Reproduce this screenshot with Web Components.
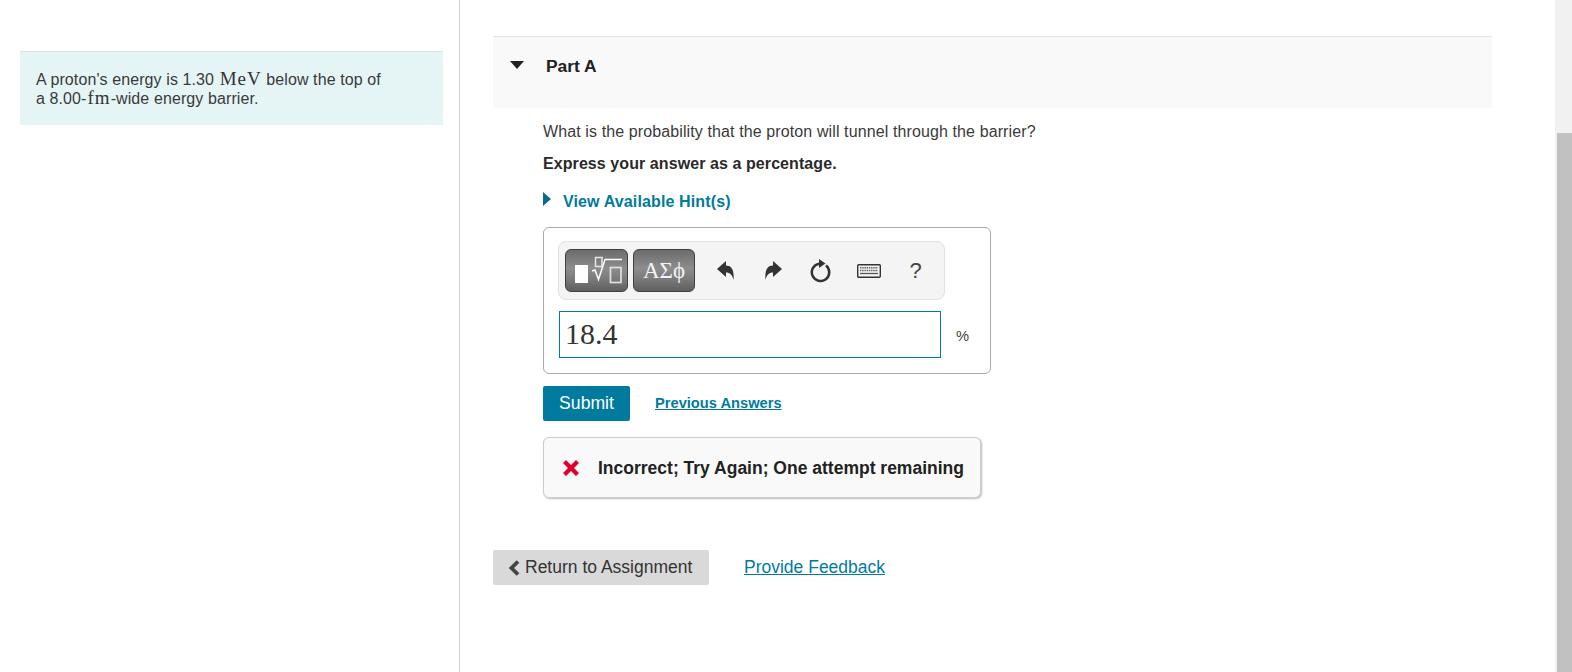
<!DOCTYPE html>
<html lang="en"><head><meta charset="utf-8"><title>Part A</title>
<style>
html,body{margin:0;height:672px;overflow:hidden;background:#fff}
body{font-family:"Liberation Sans",Arial,sans-serif;color:#333}
</style></head><body>
<mp-page>
  <mp-intro slot="left">A proton's energy is 1.30 <mp-math>MeV</mp-math> below the top of<br>a 8.00-<mp-math>fm</mp-math>-wide energy barrier.</mp-intro>
  <mp-part-header>Part A</mp-part-header>
  <mp-question></mp-question>
  <mp-answer></mp-answer>
  <mp-actions></mp-actions>
  <mp-feedback>Incorrect; Try Again; One attempt remaining</mp-feedback>
  <mp-nav></mp-nav>
</mp-page>
<script>
function def(name, html){
  customElements.define(name, class extends HTMLElement{
    constructor(){super();this.attachShadow({mode:'open'}).innerHTML=html;}
  });
}
def('mp-page',`<style>
:host{display:flex;height:672px;width:1572px}
.left{width:459px;flex:none;border-right:1px solid #c5d5e4;padding-top:51px}
.right{width:999px;flex:none;padding:36px 0 0 33px}
.spacer{flex:1}
</style>
<div class="left"><slot name="left"></slot></div>
<div class="right"><slot></slot></div>
<div class="spacer"></div>
<mp-scrollbar></mp-scrollbar>`);
def('mp-scrollbar',`<style>
:host{display:block;width:17px;height:672px;background:#f1f1f1;padding-top:133px;box-sizing:border-box}
div{margin-left:2px;height:539px;background:#c1c1c1}
</style><div></div>`);
def('mp-intro',`<style>
:host{display:block;box-sizing:border-box;margin-left:20px;width:423px;height:74px;background:#e5f5f6;border-top:1px solid #dbe3e6;padding:18px 16px 0 16px;font-size:16px;letter-spacing:.1px;line-height:19px;color:#3a3a3a}
</style><slot></slot>`);
def('mp-math',`<style>
:host{display:inline;font-family:"Liberation Serif",serif;font-size:19px;letter-spacing:1px;color:#333;line-height:0;padding-left:1px}
</style><slot></slot>`);
def('mp-part-header',`<style>
:host{display:flex;align-items:flex-start;box-sizing:border-box;height:72px;background:#f9f9f9;border-top:1px solid #e3e3e3;font:bold 17.400px/22px "Liberation Sans",sans-serif;color:#222;padding:18px 0 0 17px}
svg{width:14px;height:8px;margin:6px 22px 0 0;flex:none}
</style><svg viewBox="0 0 14 8" aria-hidden="true"><path d="M0 0H14L7 8Z" fill="#222"/></svg><slot></slot>`);
def('mp-question',`<style>
:host{display:block;padding:14px 0 0 50px;font-size:16px;letter-spacing:.11px;color:#3a3a3a}
p{margin:0;line-height:20px}
.ex{margin-top:12px;font-weight:bold;color:#2a2a2a;letter-spacing:.08px}
.hint{margin-top:18px;display:flex;align-items:center;font-weight:bold;color:#007b9e;letter-spacing:.13px}
svg{width:8px;height:14px;margin:-6px 12px 0 0;flex:none}
</style>
<p>What is the probability that the proton will tunnel through the barrier?</p>
<p class="ex">Express your answer as a percentage.</p>
<p class="hint"><svg viewBox="0 0 8 14" aria-hidden="true"><path d="M0 0L8 7L0 14Z" fill="#0a6a8a"/></svg>View Available Hint(s)</p>`);
def('mp-toolbar',`<style>
:host{display:flex;align-items:center;box-sizing:border-box;width:387px;height:59px;background:#f4f4f4;border:1px solid #e2e2e2;border-radius:8px;padding:0 0 0 6px}
.b{box-sizing:border-box;height:43px;border:1px solid #3f3f3f;border-radius:6px;background:linear-gradient(#6c6c6c,#8d8d8d 45%,#7b7b7b 70%,#5f5f5f);display:flex;align-items:center;justify-content:center;color:#f4f4f4;font:23px "Liberation Serif",serif;flex:none}
.m{width:63px;margin-right:5px}.g{width:62px}
.i{flex:none;display:flex;justify-content:center;align-items:center;color:#3a3a3a}
.i svg{display:block}
.q{font:22px "Liberation Sans",sans-serif;color:#444}
</style>
<div class="b m"><svg width="61" height="41" viewBox="0 0 61 41" aria-hidden="true"><rect x="9" y="15" width="13" height="18" fill="#fff"/><rect x="29.500" y="7.500" width="6.500" height="9" fill="none" stroke="#e8e8e8" stroke-width="1.500"/><path d="M26 21l3 -1L32.500 29.500L39 9.500H56" fill="none" stroke="#fff" stroke-width="1.500"/><rect x="44.500" y="17.500" width="10.500" height="15" fill="none" stroke="#e0e0e0" stroke-width="1.700"/></svg></div>
<div class="b g">ΑΣϕ</div>
<div class="i" style="width:61px"><svg width="17" height="19" viewBox="0 0 17 19" aria-hidden="true"><path d="M0 8L9 0V4.500C14 4.500 17.500 8 16.500 19C15.500 14 13 11.500 9 11.500V16Z" fill="#333"/></svg></div>
<div class="i" style="width:34px"><svg width="17" height="19" viewBox="0 0 17 19" aria-hidden="true"><path d="M17 8L8 0V4.500C3 4.500 -.5 8 .5 19C1.500 14 4 11.500 8 11.500V16Z" fill="#333"/></svg></div>
<div class="i" style="width:60px"><svg width="22" height="24" viewBox="0 0 22 24" aria-hidden="true"><path d="M10 4.700A8.700 8.700 0 1 0 17 6.500" fill="none" stroke="#333" stroke-width="2.500"/><path d="M10 0L16.500 4.500L10 9Z" fill="#333"/></svg></div>
<div class="i" style="width:37px"><svg width="24" height="14" viewBox="0 0 24 14" aria-hidden="true"><rect x=".7" y=".7" width="22.600" height="12.600" rx="1" fill="#f4f4f4" stroke="#333" stroke-width="1.400"/><path d="M3 3.800H21M3 6.500H21" stroke="#666" stroke-width="1.500" stroke-dasharray="1.500 .7"/><path d="M3 9.500H21" stroke="#555" stroke-width="1.300"/></svg></div>
<div class="i q" style="width:57px">?</div>`);
def('mp-answer',`<style>
:host{display:block;box-sizing:border-box;width:448px;height:147px;margin:15px 0 0 50px;border:1px solid #aaa;border-radius:6px;padding:13px 0 0 14px}
.row{display:flex;align-items:center;margin-top:11px}
.in{box-sizing:border-box;width:382px;height:47px;margin-left:1px;border:1px solid #007b9e;font:30px/43px "Liberation Serif",serif;color:#333;padding-left:5px}
.u{font-size:14.67px;color:#444;margin:2px 0 0 15px}
</style><mp-toolbar></mp-toolbar>
<div class="row"><div class="in">18.4</div><span class="u">%</span></div>`);
def('mp-actions',`<style>
:host{display:flex;align-items:center;margin:12px 0 0 50px}
.s{box-sizing:border-box;width:87px;height:35px;background:#007b9f;color:#fff;border-radius:2px;font-size:17.600px;line-height:35px;text-align:center}
a{margin:0 0 2px 25px;font-weight:bold;font-size:14.670px;color:#007b9e;text-decoration:underline}
</style><div class="s">Submit</div><a>Previous Answers</a>`);
def('mp-feedback',`<style>
:host{display:flex;align-items:center;box-sizing:border-box;width:438px;height:61px;margin:16px 0 0 50px;background:#f9f9f9;border:1px solid #ccc;border-radius:6px;box-shadow:1px 1px 2px #bbb;padding:0 0 0 18px;font:bold 17.500px "Liberation Sans",sans-serif;color:#222}
svg{width:18px;height:18px;margin-right:18px;flex:none}
span{padding-top:2px}
</style><svg viewBox="0 0 18 18" aria-hidden="true"><path d="M1 4L4 1L9 6L14 1L17 4L12 9L17 14L14 17L9 12L4 17L1 14L6 9Z" fill="#e2002b"/></svg><span><slot></slot></span>`);
def('mp-nav',`<style>
:host{display:flex;align-items:center;margin-top:52px}
.b{box-sizing:border-box;width:216px;height:35px;background:#d9d9d9;border-radius:2px;display:flex;align-items:center;padding-left:16px;font-size:17.500px;color:#333}
svg{width:11px;height:16px;margin-right:5px;flex:none}
a{margin-left:35px;font-size:17.500px;color:#007b9e;text-decoration:underline}
</style><div class="b"><svg viewBox="0 0 11 16" aria-hidden="true"><path d="M9 1.500L2.500 8L9 14.500" fill="none" stroke="#444" stroke-width="3.800"/></svg>Return to Assignment</div><a>Provide Feedback</a>`);
</script>
</body></html>
